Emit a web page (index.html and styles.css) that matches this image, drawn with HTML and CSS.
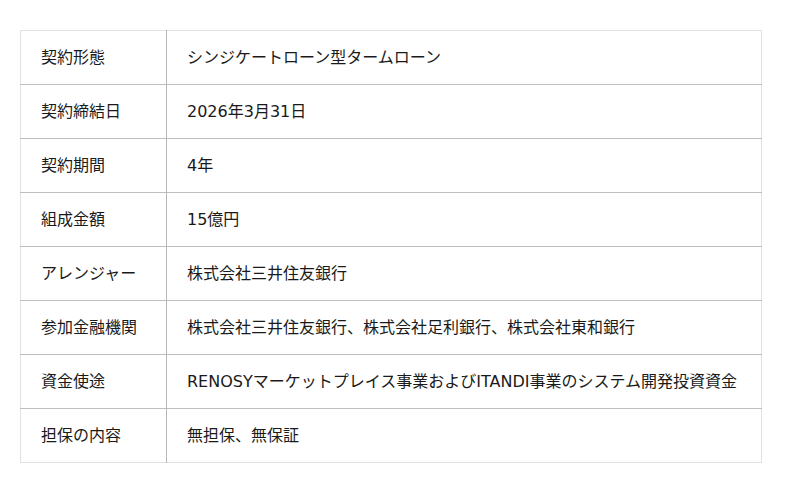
FILE: index.html
```html
<!DOCTYPE html>
<html lang="ja">
<head>
<meta charset="utf-8">
<link rel="stylesheet" href="styles.css">
</head>
<body>
<div class="page">
<table class="info">
<tbody>
<tr><th>契約形態</th><td>シンジケートローン型タームローン</td></tr>
<tr><th>契約締結日</th><td>2026年3月31日</td></tr>
<tr><th>契約期間</th><td>4年</td></tr>
<tr><th>組成金額</th><td>15億円</td></tr>
<tr><th>アレンジャー</th><td>株式会社三井住友銀行</td></tr>
<tr><th>参加金融機関</th><td>株式会社三井住友銀行、株式会社足利銀行、株式会社東和銀行</td></tr>
<tr><th>資金使途</th><td>RENOSYマーケットプレイス事業およびITANDI事業のシステム開発投資資金</td></tr>
<tr><th>担保の内容</th><td>無担保、無保証</td></tr>
</tbody>
</table>
</div>
</body>
</html>
```

FILE: styles.css
```css
html, body {
  margin: 0;
  padding: 0;
  background: #fff;
}
.page {
  padding: 30px 0 0 20px;
}
.info {
  width: 742px;
  border-collapse: collapse;
  font-family: "DejaVu Sans", "Noto Sans CJK JP", sans-serif;
  font-size: 16px;
  color: #1a1a1a;
  border: 1px solid #e2e2e2;
}
.info tr {
  height: 54px;
}
.info th, .info td {
  text-align: left;
  font-weight: normal;
  padding: 0 0 3px 20px;
  border-top: 1px solid #bdbdbd;
  vertical-align: middle;
}
.info tr:first-child th, .info tr:first-child td {
  border-top: 1px solid #e2e2e2;
}
.info th {
  width: 125px;
  border-right: 1px solid #b5b5b5;
}
```
